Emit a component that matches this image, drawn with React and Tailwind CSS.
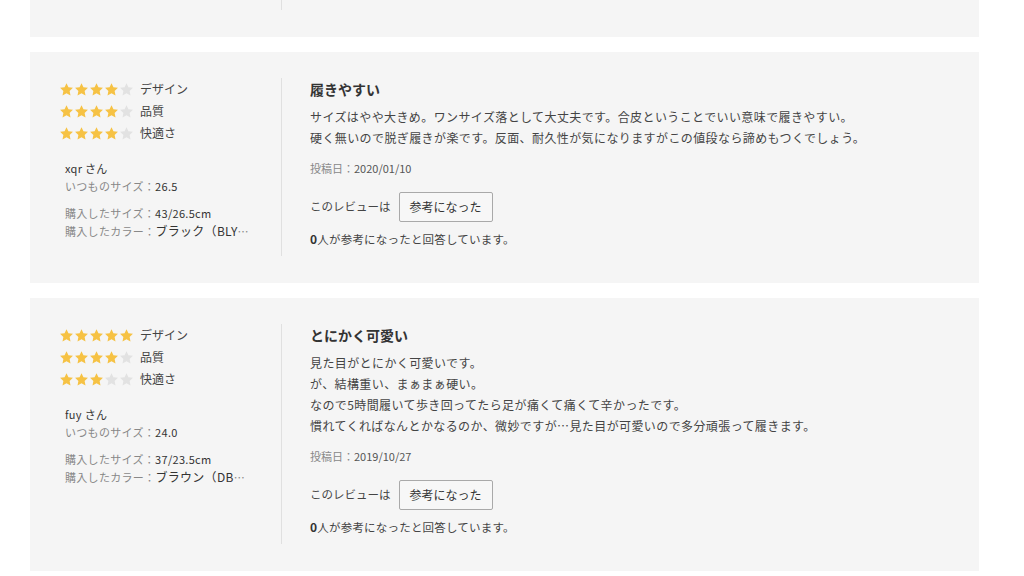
import React from "react";

const reviews = [
  {
    ratings: [
      { label: "デザイン", value: 4 },
      { label: "品質", value: 4 },
      { label: "快適さ", value: 4 },
    ],
    user: "xqr",
    usualSize: "26.5",
    size: "43/26.5cm",
    color: "ブラック（BLYKB）",
    title: "履きやすい",
    body: [
      "サイズはやや大きめ。ワンサイズ落として大丈夫です。合皮ということでいい意味で履きやすい。",
      "硬く無いので脱ぎ履きが楽です。反面、耐久性が気になりますがこの値段なら諦めもつくでしょう。",
    ],
    date: "2020/01/10",
  },
  {
    ratings: [
      { label: "デザイン", value: 5 },
      { label: "品質", value: 4 },
      { label: "快適さ", value: 3 },
    ],
    user: "fuy",
    usualSize: "24.0",
    size: "37/23.5cm",
    color: "ブラウン（DBRBR）",
    title: "とにかく可愛い",
    body: [
      "見た目がとにかく可愛いです。",
      "が、結構重い、まぁまぁ硬い。",
      "なので5時間履いて歩き回ってたら足が痛くて痛くて辛かったです。",
      "慣れてくればなんとかなるのか、微妙ですが…見た目が可愛いので多分頑張って履きます。",
    ],
    date: "2019/10/27",
  },
];

function Star({ on }) {
  return (
    <svg width="15" height="15" viewBox="0 0 24 24" className="shrink-0">
      <path
        d="M12 1.8l3.1 6.6 7.2.9-5.3 5 1.4 7.1L12 17.9l-6.4 3.5 1.4-7.1-5.3-5 7.2-.9z"
        fill={on ? "#f6c244" : "#e2e2e2"}
      />
    </svg>
  );
}

function Stars({ value }) {
  return (
    <div className="flex items-center">
      {[1, 2, 3, 4, 5].map((n) => (
        <Star key={n} on={n <= value} />
      ))}
    </div>
  );
}

function ReviewCard({ r }) {
  return (
    <div className="flex w-[949px] bg-[#f5f5f5] pt-[26px] pb-[27px]">
      {/* left: ratings + user */}
      <div className="w-[252px] shrink-0 border-r border-[#e0e0e0] pl-[29px]">
        {r.ratings.map((x, i) => (
          <div key={i} className="flex h-[22px] items-center">
            <Stars value={x.value} />
            <span className="ml-[6px] text-[12px] text-[#444]">{x.label}</span>
          </div>
        ))}
        <div className="mt-[15px] pl-[6px] text-[11px] leading-[18px] tracking-[0.3px]">
          <p className="text-[#333]">{r.user} さん</p>
          <p className="text-[#888]">
            いつものサイズ：<span className="text-[#333]">{r.usualSize}</span>
          </p>
          <p className="mt-[9px] text-[#888]">
            購入したサイズ：<span className="text-[#333]">{r.size}</span>
          </p>
          <p className="w-[186px] truncate text-[#888]">
            購入したカラー：<span className="text-[12px] text-[#333]">{r.color}</span>
          </p>
        </div>
      </div>

      {/* right: review body */}
      <div className="flex-1 pl-[28px] pb-[8px] text-[#333]">
        <h3 className="text-[14px] font-bold leading-[22px]">{r.title}</h3>
        <div className="mt-[6px] text-[12px] leading-[21px] tracking-[0.4px] text-[#444]">
          {r.body.map((line, i) => (
            <p key={i}>{line}</p>
          ))}
        </div>
        <p className="mt-[11px] text-[11px] leading-[18px] text-[#888]">
          投稿日：<span className="text-[#555]">{r.date}</span>
        </p>
        <div className="mt-[15px] flex items-center">
          <span className="mr-[8px] text-[11.5px] text-[#444]">このレビューは</span>
          <button className="h-[30px] rounded-[2px] border border-[#a9a9a9] bg-[#f7f7f7] px-[10px] text-[12px] text-[#333]">
            参考になった
          </button>
        </div>
        <p className="mt-[8px] text-[11.5px] leading-[18px] tracking-[0.2px] text-[#444]">
          <span className="font-bold text-[12px] text-[#333]">0</span>人が参考になったと回答しています。
        </p>
      </div>
    </div>
  );
}

export default function App() {
  return (
    <div
      className="h-[576px] overflow-hidden bg-white pl-[30px]"
      style={{ fontFamily: '"Noto Sans CJK JP", "Noto Sans", sans-serif' }}
    >
      {/* bottom of the previous review, scrolled off */}
      <div className="h-[37px] w-[949px] bg-[#f5f5f5]">
        <div className="h-[10px] w-[252px] border-r border-[#e0e0e0]" />
      </div>

      <div className="mt-[15px] flex flex-col gap-[15px]">
        {reviews.map((r, i) => (
          <ReviewCard key={i} r={r} />
        ))}
      </div>
    </div>
  );
}
